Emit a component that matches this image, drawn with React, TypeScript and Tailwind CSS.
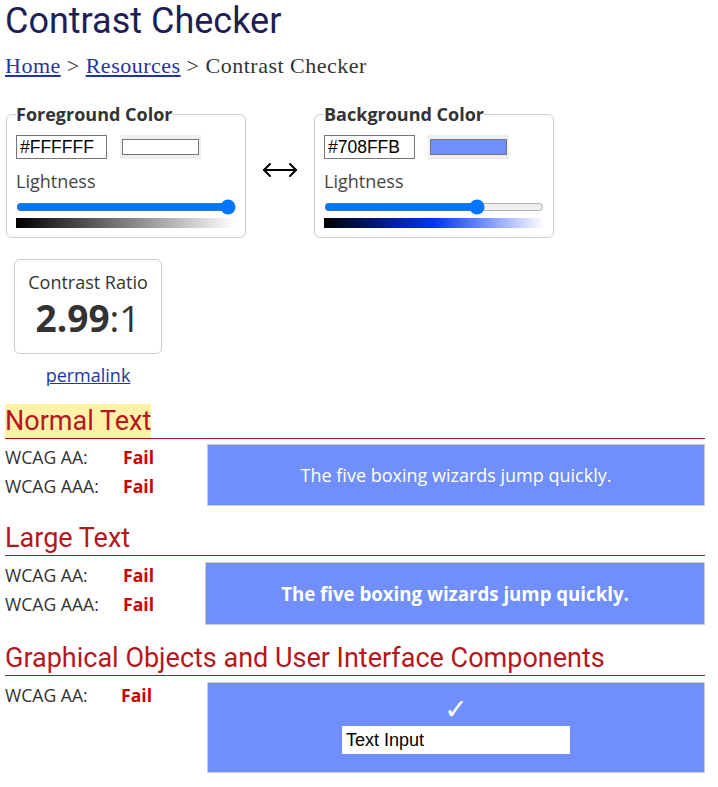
import React from "react";

const SANS = "font-['Open_Sans',sans-serif]";

type ColorBoxProps = {
  label: string;
  hex: string;
  swatch: string;
  lightness: number;
  gradient: string;
};

const ColorBox: React.FC<ColorBoxProps> = ({ label, hex, swatch, lightness, gradient }) => (
  <fieldset className="w-[240px] border border-[#cccccc] rounded-[6px] px-[9px] pb-[9px]">
    <legend className="text-[18px] leading-[24px] font-bold text-[#333333]">{label}</legend>
    <div className="flex items-center mt-[9px]">
      <input
        type="text"
        defaultValue={hex}
        className="w-[91px] h-[24px] border border-[#767676] px-[3px] text-[17.5px] text-black font-['Liberation_Sans',Arial,sans-serif] outline-none"
      />
      <div className="ml-[13px] w-[81px] h-[24px] bg-[#efefef] px-[2px] py-[4px]">
        <div className="w-full h-full border border-[#767676]" style={{ backgroundColor: swatch }} />
      </div>
    </div>
    <div className="mt-[10px] text-[18px] leading-[24px] text-[#444444]">Lightness</div>
    <input
      type="range"
      min={0}
      max={100}
      defaultValue={lightness}
      className="block w-[220px] h-[16px] m-0 mt-[6px]"
    />
    <div className="mt-[3px] w-[220px] h-[10px]" style={{ background: gradient }} />
  </fieldset>
);

const SectionHeading: React.FC<{ title: string; highlight?: boolean }> = ({ title, highlight }) => (
  <h2 className="font-[Roboto,sans-serif] text-[27px] leading-[34px] text-[#b5171e] border-b border-[#9e1b20]">
    <span className={highlight ? "inline-block bg-[#fff2a8]" : "inline-block"}>{title}</span>
  </h2>
);

const Result: React.FC<{ label: string; w?: string }> = ({ label, w = "w-[118px]" }) => (
  <div className="flex text-[17.6px] leading-[29px] text-[#333333]">
    <span className={w}>{label}</span>
    <span className="font-bold text-[#cc0000]">Fail</span>
  </div>
);

export default function App() {
  return (
    <div className={`${SANS} bg-white min-h-[787px] px-[5px] text-[#333333]`}>
      <h1 className="font-[Roboto,sans-serif] text-[36px] leading-[42px] text-[#211d55]">Contrast Checker</h1>

      <div className="mt-[10px] font-['Liberation_Serif',serif] text-[22px] leading-[28px] tracking-[0.5px] text-[#333333]">
        <a href="#" className="underline text-[#1f35a3]">Home</a> &gt;{" "}
        <a href="#" className="underline text-[#1f35a3]">Resources</a> &gt; Contrast Checker
      </div>

      <div className="mt-[22px] flex items-center pl-[1px]">
        <ColorBox
          label="Foreground Color"
          hex="#FFFFFF"
          swatch="#ffffff"
          lightness={100}
          gradient="linear-gradient(to right, #000000, #ffffff)"
        />
        <div className="w-[68px] flex justify-center">
          <svg width="36" height="16" viewBox="0 0 36 16" fill="none" stroke="#000" strokeWidth="2" strokeLinecap="round" strokeLinejoin="round">
            <path d="M2 8H34" />
            <path d="M8 2L2 8L8 14" />
            <path d="M28 2L34 8L28 14" />
          </svg>
        </div>
        <ColorBox
          label="Background Color"
          hex="#708FFB"
          swatch="#708ffb"
          lightness={71}
          gradient="linear-gradient(to right, #000000, #0033ff, #ffffff)"
        />
      </div>

      <div className="mt-[21px] ml-[9px] w-[148px] flex flex-col items-center">
        <div className="w-full border border-[#cccccc] rounded-[6px] pt-[10px] pb-[12px] flex flex-col items-center">
          <div className="text-[18px] leading-[24px] text-[#333333]">Contrast Ratio</div>
          <div className="text-[37px] leading-[47px] text-[#333333]">
            <span className="font-bold">2.99</span>:1
          </div>
        </div>
        <a href="#" className="mt-[9px] text-[18px] leading-[24px] underline text-[#1f35a3]">permalink</a>
      </div>

      <section className="mt-[17px] w-[700px]">
        <SectionHeading title="Normal Text" highlight />
        <div className="flex mt-[4px]">
          <div className="w-[202px]">
            <Result label="WCAG AA:" />
            <Result label="WCAG AAA:" />
          </div>
          <div className="flex-1 mt-[1px] h-[62px] bg-[#708ffb] border border-[#cccccc] flex items-center justify-center text-white text-[18px]">
            The five boxing wizards jump quickly.
          </div>
        </div>
      </section>

      <section className="mt-[15px] w-[700px]">
        <SectionHeading title="Large Text" />
        <div className="flex mt-[5px]">
          <div className="w-[200px]">
            <Result label="WCAG AA:" />
            <Result label="WCAG AAA:" />
          </div>
          <div className="flex-1 mt-[1px] h-[63px] bg-[#708ffb] border border-[#cccccc] flex items-center justify-center text-white text-[18.66px] font-bold">
            The five boxing wizards jump quickly.
          </div>
        </div>
      </section>

      <section className="mt-[16px] w-[700px]">
        <SectionHeading title="Graphical Objects and User Interface Components" />
        <div className="flex mt-[5px]">
          <div className="w-[202px]">
            <Result label="WCAG AA:" w="w-[116px]" />
          </div>
          <div className="flex-1 mt-[1px] h-[91px] bg-[#708ffb] border border-[#cccccc] flex flex-col items-center pt-[13px]">
            <span className="font-['DejaVu_Sans',sans-serif] text-[28px] leading-[28px] text-white">✓</span>
            <input
              type="text"
              defaultValue="Text Input"
              className="mt-[2px] w-[228px] h-[28px] bg-white px-[4px] text-[18px] text-black font-['Liberation_Sans',Arial,sans-serif] outline-none"
            />
          </div>
        </div>
      </section>
    </div>
  );
}
